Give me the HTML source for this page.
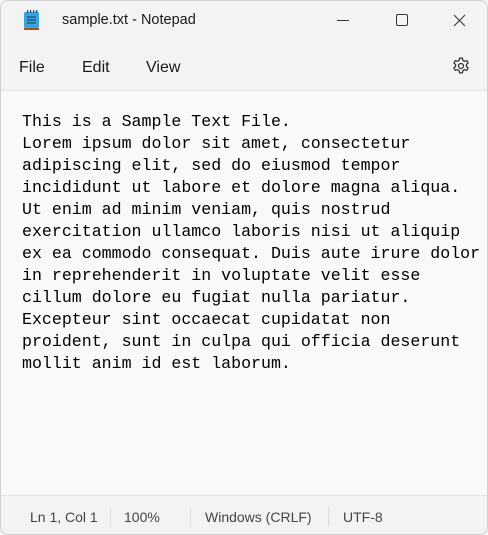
<!DOCTYPE html>
<html><head><style>
*{margin:0;padding:0;box-sizing:border-box}
body{width:488px;height:535px;background:#f3f3f3;font-family:"Liberation Sans",sans-serif;position:relative;overflow:hidden}
.win{position:absolute;inset:0;border:1px solid #d0d0d0;border-radius:8px;background:#f3f3f3;overflow:hidden}
.title{position:absolute;left:61px;top:11px;font-size:14.5px;color:#1a1a1a}
.menu{position:absolute;top:58px;font-size:16px;color:#1a1a1a}
.editor{position:absolute;left:0;right:0;top:89px;height:406px;background:#f9f9f9;border-top:1px solid #e3e3e3;border-bottom:1px solid #e3e3e3}
pre{position:absolute;left:21px;top:20px;font-family:"Liberation Mono",monospace;font-size:16.6px;line-height:22px;color:#000}
.status{position:absolute;top:508px;font-size:14px;color:#444}
.sep{position:absolute;top:506px;width:1px;height:20px;background:#dcdcdc}
</style></head><body><div class="win">
<svg style="position:absolute;left:22px;top:9px" width="18" height="21" viewBox="0 0 18 21"><rect x="1" y="2" width="15" height="16" rx="1.5" fill="#3aa3d8"/><rect x="1" y="18" width="15" height="2" fill="#a0522d"/><g stroke="#1f4f7a" stroke-width="1.2"><line x1="4" y1="7" x2="13" y2="7"/><line x1="4" y1="10" x2="13" y2="10"/><line x1="4" y1="13" x2="13" y2="13"/></g><g fill="#1f4f7a"><rect x="4" y="0" width="1.3" height="3"/><rect x="7" y="0" width="1.3" height="3"/><rect x="10" y="0" width="1.3" height="3"/><rect x="13" y="0" width="1.3" height="3"/></g></svg>
<div class="title">sample.txt - Notepad</div>
<svg style="position:absolute;left:336px;top:12px" width="140" height="16"><line x1="0" y1="7.5" x2="12" y2="7.5" stroke="#333"/><rect x="59.5" y="1.5" width="11" height="11" rx="1.5" fill="none" stroke="#333"/><path d="M117 2L128 13M128 2L117 13" stroke="#333"/></svg>
<div class="menu" style="left:18px">File</div>
<div class="menu" style="left:81px">Edit</div>
<div class="menu" style="left:145px">View</div>
<svg style="position:absolute;left:450px;top:55px" width="20" height="20" viewBox="0 0 24 24" fill="none" stroke="#333" stroke-width="1.5"><circle cx="12" cy="12" r="3"/><path d="M10.3 2.5h3.4l.6 2.8 1.9 1.1 2.7-.9 1.7 2.9-2.1 1.9v2.2l2.1 1.9-1.7 2.9-2.7-.9-1.9 1.1-.6 2.8h-3.4l-.6-2.8-1.9-1.1-2.7.9-1.7-2.9 2.1-1.9v-2.2L3.5 8.4l1.7-2.9 2.7.9 1.9-1.1z"/></svg>
<div class="editor"><pre>This is a Sample Text File.
Lorem ipsum dolor sit amet, consectetur
adipiscing elit, sed do eiusmod tempor
incididunt ut labore et dolore magna aliqua.
Ut enim ad minim veniam, quis nostrud
exercitation ullamco laboris nisi ut aliquip
ex ea commodo consequat. Duis aute irure dolor
in reprehenderit in voluptate velit esse
cillum dolore eu fugiat nulla pariatur.
Excepteur sint occaecat cupidatat non
proident, sunt in culpa qui officia deserunt
mollit anim id est laborum.</pre></div>
<div class="status" style="left:29px">Ln 1, Col 1</div>
<div class="sep" style="left:109px"></div>
<div class="status" style="left:123px">100%</div>
<div class="sep" style="left:189px"></div>
<div class="status" style="left:204px">Windows (CRLF)</div>
<div class="sep" style="left:327px"></div>
<div class="status" style="left:342px">UTF-8</div>
</div></body></html>
